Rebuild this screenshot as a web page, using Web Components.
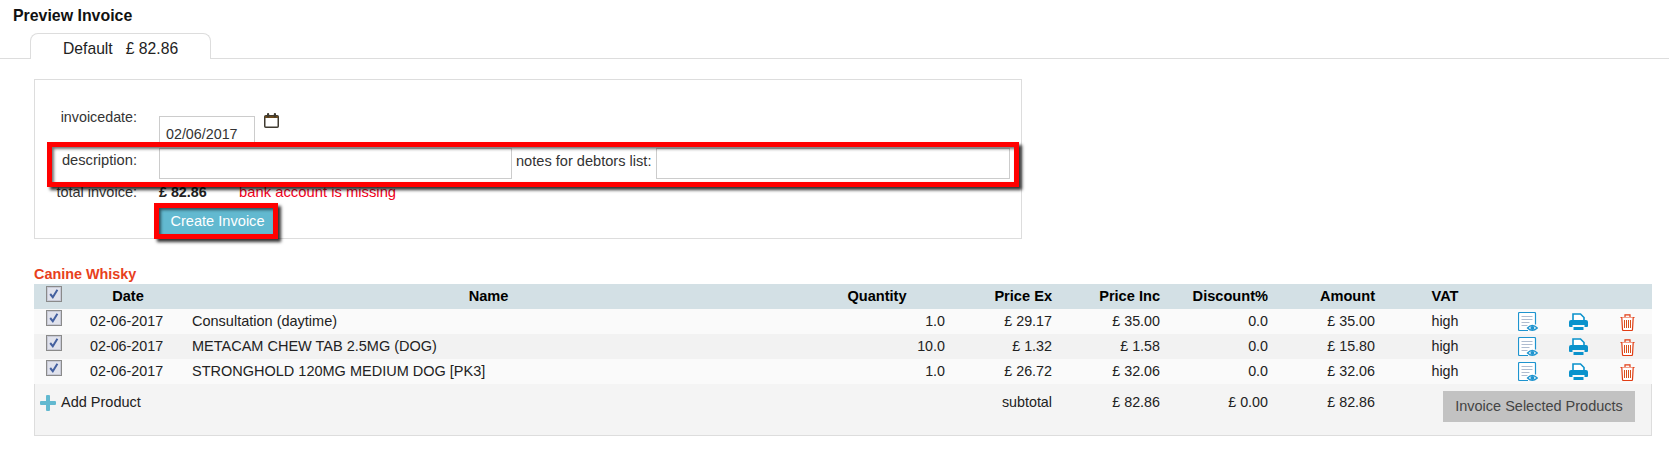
<!DOCTYPE html>
<html>
<head>
<meta charset="utf-8">
<title>Preview Invoice</title>
<style>
  html, body { margin: 0; background: #fff; }
  body {
    font-family: "Liberation Sans", Arial, sans-serif;
    font-size: 14.3px;
    color: #222;
    --cols: 46px 96px 625px 152px 107px 108px 108px 107px 120px 50px 50px 1fr;
  }
</style>
</head>
<body>
<page-head>Preview Invoice</page-head>
<tab-bar>Default &nbsp; £ 82.86</tab-bar>

<invoice-form>
  <form-row label="invoicedate:" kind="date">
    <text-box width="96" value="02/06/2017"></text-box>
    <icon-calendar></icon-calendar>
  </form-row>
  <red-mark area="row">
    <form-row label="description:">
      <text-box width="353"></text-box>
      <side-label>notes for debtors list:</side-label>
      <text-box width="354"></text-box>
    </form-row>
  </red-mark>
  <form-row label="total invoice:" kind="total">
    <total-value>£ 82.86</total-value>
    <missing-note>bank account is missing</missing-note>
  </form-row>
  <form-row kind="action">
    <red-mark area="button"><action-button>Create Invoice</action-button></red-mark>
  </form-row>
</invoice-form>

<group-title>Canine Whisky</group-title>

<product-table>
  <product-row kind="head">
    <span class="check"><check-box small></check-box></span><span class="c">Date</span><span class="c">Name</span><span class="c">Quantity</span><span class="r">Price Ex</span><span class="r">Price Inc</span><span class="r">Discount%</span><span class="r">Amount</span><span class="vat">VAT</span><span></span><span></span><span></span>
  </product-row>
  <product-row>
    <span class="check"><check-box></check-box></span><span class="d">02-06-2017</span><span class="n">Consultation (daytime)</span><span class="r">1.0</span><span class="r">£ 29.17</span><span class="r">£ 35.00</span><span class="r">0.0</span><span class="r">£ 35.00</span><span class="vat">high</span><span class="i"><icon-view></icon-view></span><span class="i"><icon-print></icon-print></span><span class="i"><icon-trash></icon-trash></span>
  </product-row>
  <product-row kind="even">
    <span class="check"><check-box></check-box></span><span class="d">02-06-2017</span><span class="n">METACAM CHEW TAB 2.5MG (DOG)</span><span class="r">10.0</span><span class="r">£ 1.32</span><span class="r">£ 1.58</span><span class="r">0.0</span><span class="r">£ 15.80</span><span class="vat">high</span><span class="i"><icon-view></icon-view></span><span class="i"><icon-print></icon-print></span><span class="i"><icon-trash></icon-trash></span>
  </product-row>
  <product-row>
    <span class="check"><check-box></check-box></span><span class="d">02-06-2017</span><span class="n">STRONGHOLD 120MG MEDIUM DOG [PK3]</span><span class="r">1.0</span><span class="r">£ 26.72</span><span class="r">£ 32.06</span><span class="r">0.0</span><span class="r">£ 32.06</span><span class="vat">high</span><span class="i"><icon-view></icon-view></span><span class="i"><icon-print></icon-print></span><span class="i"><icon-trash></icon-trash></span>
  </product-row>
  <product-foot>
    <span slot="add">Add Product</span>
    <span slot="sub">subtotal</span>
    <span slot="inc">£ 82.86</span>
    <span slot="disc">£ 0.00</span>
    <span slot="amount">£ 82.86</span>
    <span slot="btn">Invoice Selected Products</span>
  </product-foot>
</product-table>

<script>
// small helper, every element below is just a style + markup in an open shadow root
function simple(name, html) {
  customElements.define(name, class extends HTMLElement {
    constructor() {
      super();
      this.attachShadow({ mode: 'open' });
      this.shadowRoot.innerHTML = html;
    }
  });
}

simple('page-head', `
  <style>
    :host { display: block; height: 33px; padding: 7px 0 0 13px; box-sizing: border-box;
      font-size: 15.9px; line-height: 17px; font-weight: bold; color: #111; }
  </style><slot></slot>`);

simple('tab-bar', `
  <style>
    :host { display: block; height: 26px; box-sizing: border-box; border-bottom: 1px solid #ddd; padding-left: 30px; }
    .tab { box-sizing: border-box; width: 181px; height: 26px; background: #fff;
      border: 1px solid #ddd; border-bottom: 0; border-radius: 8px 8px 0 0;
      padding: 6px 0 0 32px; font-size: 15.7px; line-height: 18px; color: #222; }
  </style><div class="tab"><slot></slot></div>`);

simple('invoice-form', `
  <style>
    :host { display: block; box-sizing: border-box; width: 988px; height: 160px; margin: 20px 0 0 34px;
      border: 1px solid #ddd; padding-top: 28px; }
  </style><slot></slot>`);

class FormRow extends HTMLElement {
  constructor() {
    super();
    this.attachShadow({ mode: 'open' });
    const kind = this.getAttribute('kind') || 'plain';
    this.shadowRoot.innerHTML = `
      <style>
        :host { display: flex; align-items: flex-start; color: #333; }
        .label { flex: none; width: 102px; margin-right: 22px; text-align: right; line-height: 17px; font-size: 14.5px; }
        .main { display: flex; align-items: flex-start; }
        :host([kind="date"]) { height: 40px; }
        :host([kind="date"]) .main { padding-top: 8px; }
        :host([kind="date"]) .label { padding-top: 1px; font-size: 14.3px; }
        .plain { height: 32px; }
        :host([kind="total"]) { margin-top: 4px; height: 17px; }
        :host([kind="action"]) { margin-top: 7px; }
        :host(:not([kind])) .label { padding-top: 4px; font-size: 14.7px; }
      </style>
      <div class="label">${this.getAttribute('label') || ''}</div>
      <div class="main ${kind}"><slot></slot></div>`;
  }
}
customElements.define('form-row', FormRow);

class TextBox extends HTMLElement {
  constructor() {
    super();
    this.attachShadow({ mode: 'open' });
    this.shadowRoot.innerHTML = `
      <style>
        :host { display: block; box-sizing: border-box; width: ${this.getAttribute('width')}px; height: 31px;
          border: 1px solid #ccc; background: #fff; padding: 9px 0 0 6px; line-height: 17px; color: #333; }
      </style>${this.getAttribute('value') || ''}`;
  }
}
customElements.define('text-box', TextBox);

simple('side-label', `<style>:host { display: block; width: 144px; padding: 5px 0 0 4px; box-sizing: border-box; line-height: 17px; color: #333; font-size: 14.6px; white-space: nowrap; }</style><slot></slot>`);
simple('total-value', `<style>:host { display: block; width: 80px; font-weight: bold; line-height: 17px; color: #222; }</style><slot></slot>`);
simple('missing-note', `<style>:host { display: block; line-height: 17px; color: #f0001c; font-size: 14.8px; }</style><slot></slot>`);

// the annotation rectangles lie over the form, so their frame is absolute
simple('red-mark', `
  <style>
    :host { display: block; position: relative; }
    .frame { position: absolute; border: 5px solid #f00; box-shadow: 3px 3px 3px rgba(0,0,0,.8), inset 2px 2px 3px rgba(0,0,0,.55); pointer-events: none; }
    :host([area="row"]) .frame { left: 12px; right: 2px; top: -6px; bottom: -7px; }
    :host([area="button"]) .frame { left: -5px; right: -4px; top: -5px; bottom: -4px; }
  </style><slot></slot><div class="frame"></div>`);

simple('action-button', `
  <style>
    :host { display: block; box-sizing: border-box; width: 115px; height: 27px; background: #62b9d0; color: #fff;
      text-align: center; line-height: 27px; font-size: 14.6px; white-space: nowrap; padding-left: 2px; }
  </style><slot></slot>`);

simple('group-title', `
  <style>
    :host { display: block; height: 45px; box-sizing: border-box; padding: 26px 0 0 34px;
      font-size: 14.4px; line-height: 18px; font-weight: bold; color: #e8401c; }
  </style><slot></slot>`);

simple('product-table', `<style>:host { display: block; width: 1618px; margin-left: 34px; }</style><slot></slot>`);

simple('product-row', `
  <style>
    :host { display: grid; grid-template-columns: var(--cols); height: 25px; line-height: 25px; background: #fafafa; color: #222; }
    :host([kind="even"]) { background: #f2f2f2; }
    :host([kind="head"]) { background: #d3e0e5; font-weight: bold; color: #000; font-size: 14.6px; }
    ::slotted(.check) { padding: 1px 0 0 12px; line-height: 0; }
    ::slotted(.c) { text-align: center; }
    ::slotted(.r) { text-align: right; padding-right: 8px; }
    ::slotted(.d) { padding-left: 10px; }
    ::slotted(.n) { padding-left: 16px; font-size: 14.5px; }
    ::slotted(.vat) { text-align: center; padding-left: 4px; }
    ::slotted(.i) { display: flex; align-items: center; justify-content: center; padding-top: 1px; }
  </style><slot></slot>`);

simple('product-foot', `
  <style>
    :host { display: grid; grid-template-columns: var(--cols); height: 52px; background: #f4f4f4; line-height: 17px;
      box-shadow: inset 1px 0 #ddd, inset -1px 0 #ddd, inset 0 -1px #ddd; color: #222; }
    .add { grid-column: 1 / 5; display: flex; align-items: flex-start; padding: 11px 0 0 6px; font-size: 14.5px; }
    .add svg { margin-right: 5px; }
    .add span { margin-top: -1px; }
    .v { padding: 10px 8px 0 0; text-align: right; }
    .btn { grid-column: 9 / -1; justify-self: end; align-self: start; margin: 7px 17px 0 0; box-sizing: border-box;
      width: 192px; height: 31px; line-height: 31px; text-align: center; background: #c2c2c2; color: #444; font-size: 14.5px; white-space: nowrap; }
  </style>
  <div class="add">
    <svg width="16" height="16" viewBox="0 0 16 16"><path d="M6 1q0-1 1-1h2q1 0 1 1v5h5q1 0 1 1v2q0 1-1 1h-5v5q0 1-1 1H7q-1 0-1-1v-5H1q-1 0-1-1V7q0-1 1-1h5z" fill="#62b9d0"/></svg>
    <span><slot name="add"></slot></span>
  </div>
  <div class="v"><slot name="sub"></slot></div>
  <div class="v"><slot name="inc"></slot></div>
  <div class="v"><slot name="disc"></slot></div>
  <div class="v"><slot name="amount"></slot></div>
  <div class="btn"><slot name="btn"></slot></div>`);

simple('check-box', `
  <style>
    :host { display: inline-block; width: 16px; height: 16px; }
    :host([small]) { margin-top: 1px; }
    svg { display: block; }
  </style>
  <svg width="16" height="16" viewBox="0 0 16 16">
    <rect x=".5" y=".5" width="15" height="15" fill="#e0e2ec" stroke="#8a8a8a"/>
    <rect x="1.500" y="1.500" width="13" height="13" fill="none" stroke="#c8cad6"/>
    <path d="M4.200 8l2.600 3.200L11.400 3.800" fill="none" stroke="#44609f" stroke-width="2"/>
  </svg>`);

simple('icon-calendar', `
  <style>:host { display: block; margin: -3px 0 0 9px; line-height: 0; }</style>
  <svg width="15" height="15" viewBox="0 0 15 15">
    <rect x=".75" y="2.750" width="13.500" height="11.500" rx="1" fill="#fff" stroke="#3f3a30" stroke-width="1.500"/>
    <rect x="1" y="3" width="13" height="2" fill="#6a4a1e"/>
    <rect x="3" y="0" width="2.200" height="4.500" rx="1" fill="#3f3a30"/>
    <rect x="9.800" y="0" width="2.200" height="4.500" rx="1" fill="#3f3a30"/>
  </svg>`);

simple('icon-view', `
  <style>:host { display: block; line-height: 0; }</style>
  <svg width="20" height="20" viewBox="0 0 20 20">
    <path d="M10 18.500H1.500a1 1 0 0 1-1-1V1.500a1 1 0 0 1 1-1h15a1 1 0 0 1 1 1v11" fill="#fff" stroke="#1e94cf" stroke-width="1.200"/>
    <path d="M3.500 4.500h11M3.500 7.500h11M3.500 10.500h8M3.500 13.500h6" stroke="#aebcd0"/>
    <path d="M9.500 16q4.700-5 9.800 0q-5.100 4.700-9.800 0z" fill="#fff" stroke="#1e94cf" stroke-width="1.300"/>
    <circle cx="14.400" cy="16" r="2" fill="#1e94cf"/>
  </svg>`);

simple('icon-print', `
  <style>:host { display: block; line-height: 0; }</style>
  <svg width="19" height="18" viewBox="0 0 19 18">
    <path d="M4 8V1h7.500L15 4.500V8" fill="#fff" stroke="#0a92cc" stroke-width="1.600"/>
    <path d="M2 7h15q2 0 2 2v4q0 1-1 1h-2.500v-2h-12v2H1q-1 0-1-1V9q0-2 2-2z" fill="#0a92cc"/>
    <path d="M4.500 14h10v3h-10z" fill="#0a92cc"/>
  </svg>`);

simple('icon-trash', `
  <style>:host { display: block; line-height: 0; }</style>
  <svg width="15" height="17" viewBox="0 0 15 17">
    <path d="M.5 3.500h14M5 3.500V.8h5v2.700" fill="none" stroke="#e23d14" stroke-width="1.200"/>
    <path d="M1.800 3.500l.7 12a1 1 0 0 0 1 1h8a1 1 0 0 0 1-1l.7-12" fill="#fff" stroke="#e23d14" stroke-width="1.200"/>
    <path d="M4.500 6v8M6.500 6v8M8.500 6v8M10.500 6v8" stroke="#d8501c"/>
  </svg>`);
</script>
</body>
</html>
